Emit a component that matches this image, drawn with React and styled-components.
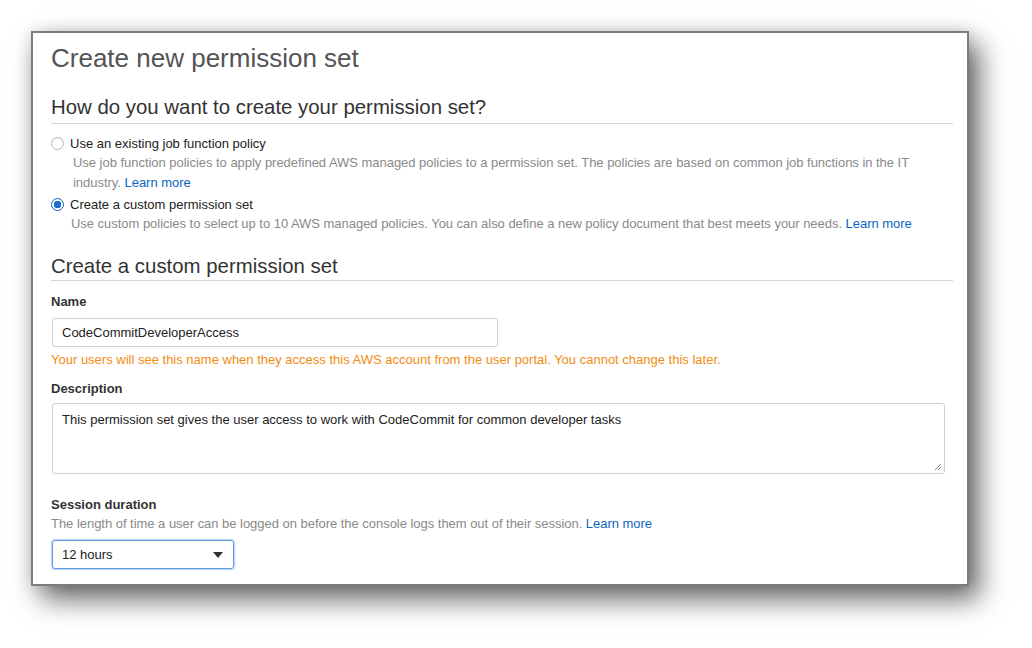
import React from "react"
import styled, { createGlobalStyle } from "styled-components"

const Global = createGlobalStyle`
  html, body { margin: 0; padding: 0; background: #fff; }
  body { font-family: "Liberation Sans", Arial, sans-serif; }
`

const Page = styled.div`
  width: 1032px;
  height: 648px;
  padding: 31px 0 0 31px;
  box-sizing: border-box;
`

const Card = styled.div`
  width: 938px;
  height: 555px;
  box-sizing: border-box;
  background: #fff;
  border: 2px solid #7c7b7d;
  box-shadow: 10px 13px 26px rgba(0, 0, 0, 0.6), 0 0 14px rgba(0, 0, 0, 0.12);
  padding: 8px 14px 0 18px;
  overflow: hidden;
`

const Title = styled.h1`
  margin: 0;
  font-size: 26px;
  font-weight: 400;
  color: #545454;
  line-height: 34px;
`

const Section = styled.h2`
  margin: ${p => p.$top}px 0 0;
  font-size: 20.4px;
  font-weight: 400;
  color: #333;
  line-height: 26px;
  padding-bottom: ${p => p.$pad}px;
  border-bottom: 1px solid #d5d5d5;
`

const Options = styled.div`
  display: flex;
  flex-direction: column;
  gap: 2px;
  margin-top: 10px;
`

const Option = styled.label`
  display: grid;
  grid-template-columns: 19px 1fr;
  align-items: start;
`

const Radio = styled.span`
  width: 13px;
  height: 13px;
  margin-top: 3px;
  border-radius: 50%;
  box-sizing: border-box;
  border: 1px solid ${p => (p.$on ? "#1166bb" : "#b5b5b5")};
  background: ${p => (p.$on ? "radial-gradient(circle, #1a6fc9 0 3.5px, #fff 4px)" : "#fff")};
  box-shadow: inset 0 1px 1px rgba(0, 0, 0, 0.06);
`

const OptionLabel = styled.div`
  font-size: 13px;
  color: #222;
  line-height: 19px;
`

const Hint = styled.div`
  font-size: 13px;
  color: #8a8a8a;
  line-height: 20px;
  letter-spacing: -0.03px;
  margin-left: ${p => p.$indent || 0}px;
`

const Link = styled.a`
  color: #0a66c2;
  text-decoration: none;
`

const Field = styled.div`
  margin-top: ${p => p.$top}px;
`

const Label = styled.div`
  font-size: 13px;
  font-weight: 700;
  color: #333;
  line-height: 18px;
  margin-bottom: ${p => p.$gap || 0}px;
`

const Input = styled.div`
  width: 446px;
  height: 29px;
  box-sizing: border-box;
  border: 1px solid #cfcfcf;
  border-radius: 3px;
  padding: 0 9px;
  display: flex;
  align-items: center;
  font-size: 13px;
  color: #222;
  margin-left: 1px;
`

const Warn = styled.div`
  font-size: 13px;
  color: #f08d14;
  line-height: 20px;
  margin-top: 3px;
`

const TextArea = styled.div`
  position: relative;
  width: 893px;
  height: 71px;
  box-sizing: border-box;
  border: 1px solid #cfcfcf;
  border-radius: 3px;
  padding: 7px 9px;
  font-size: 13px;
  color: #222;
  line-height: 18px;
  margin-left: 1px;
`

const Grip = styled.svg`
  position: absolute;
  right: 2px;
  bottom: 2px;
`

const Select = styled.div`
  width: 182px;
  height: 29px;
  box-sizing: border-box;
  border: 1px solid #5d9be0;
  border-radius: 3px;
  box-shadow: 0 0 0 1px rgba(93, 155, 224, 0.25), 0 0 3px rgba(93, 155, 224, 0.5);
  padding: 0 10px 0 9px;
  display: flex;
  align-items: center;
  justify-content: space-between;
  font-size: 13px;
  color: #222;
  margin: 6px 0 0 1px;
`

const Caret = styled.span`
  width: 0;
  height: 0;
  border-left: 5px solid transparent;
  border-right: 5px solid transparent;
  border-top: 6px solid #333;
`

const App = () => {
  return (
    <Page>
      <Global />
      <Card>
        <Title>Create new permission set</Title>
        <Section $top={19} $pad={3}>How do you want to create your permission set?</Section>
        <Options>
          <Option>
            <Radio />
            <div>
              <OptionLabel>Use an existing job function policy</OptionLabel>
              <Hint $indent={3}>
                Use job function policies to apply predefined AWS managed policies to a permission set. The policies are based on common job functions in the IT
                industry. <Link>Learn more</Link>
              </Hint>
            </div>
          </Option>
          <Option>
            <Radio $on />
            <div>
              <OptionLabel>Create a custom permission set</OptionLabel>
              <Hint $indent={1}>
                Use custom policies to select up to 10 AWS managed policies. You can also define a new policy document that best meets your needs. <Link>Learn more</Link>
              </Hint>
            </div>
          </Option>
        </Options>
        <Section $top={19} $pad={1}>Create a custom permission set</Section>
        <Field $top={12}>
          <Label $gap={7}>Name</Label>
          <Input>CodeCommitDeveloperAccess</Input>
          <Warn>Your users will see this name when they access this AWS account from the user portal. You cannot change this later.</Warn>
        </Field>
        <Field $top={10}>
          <Label $gap={5}>Description</Label>
          <TextArea>
            This permission set gives the user access to work with CodeCommit for common developer tasks
            <Grip width="8" height="8" viewBox="0 0 8 8">
              <path d="M1 7L7 1M4 7L7 4" stroke="#888" strokeWidth="1" />
            </Grip>
          </TextArea>
        </Field>
        <Field $top={22}>
          <Label>Session duration</Label>
          <Hint>
            The length of time a user can be logged on before the console logs them out of their session. <Link>Learn more</Link>
          </Hint>
          <Select>
            12 hours
            <Caret />
          </Select>
        </Field>
      </Card>
    </Page>
  )
}

export default App
